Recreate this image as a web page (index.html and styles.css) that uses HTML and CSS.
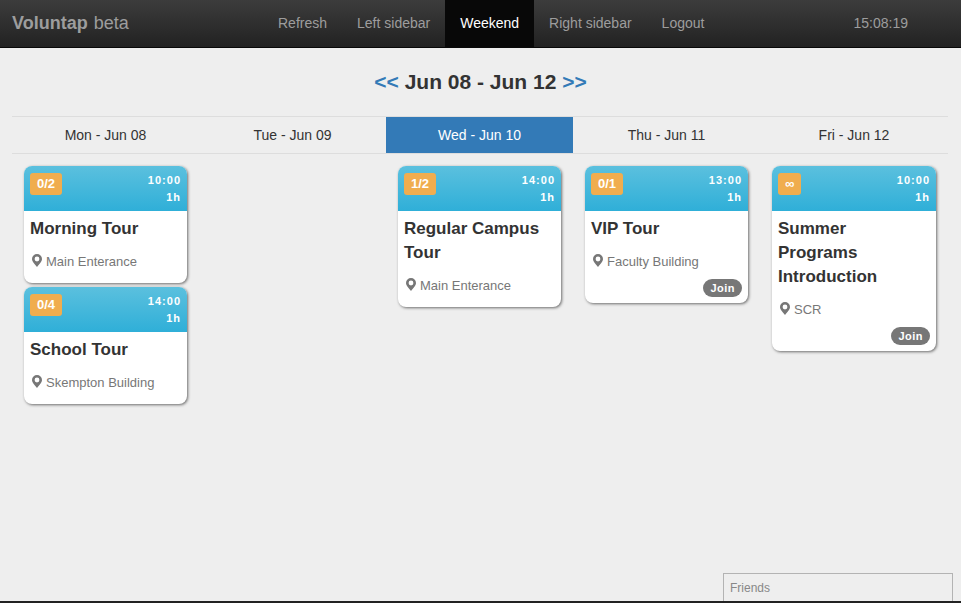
FILE: index.html
```html
<!DOCTYPE html>
<html lang="en">
<head>
    <meta charset="UTF-8">
    <title>Voluntap beta</title>
    <link rel="stylesheet" href="styles.css">
</head>
<body>

    <nav class="navbar">
        <a class="brand" href="#"><b>Voluntap</b> beta</a>
        <ul class="nav">
            <li><a href="#">Refresh</a></li>
            <li><a href="#">Left sidebar</a></li>
            <li class="active"><a href="#">Weekend</a></li>
            <li><a href="#">Right sidebar</a></li>
            <li><a href="#">Logout</a></li>
        </ul>
        <div class="clock">15:08:19</div>
    </nav>

    <h3 class="week"><a href="#">&lt;&lt;</a> Jun 08 - Jun 12 <a href="#">&gt;&gt;</a></h3>

    <div class="days">
        <div class="day">Mon - Jun 08</div>
        <div class="day">Tue - Jun 09</div>
        <div class="day active">Wed - Jun 10</div>
        <div class="day">Thu - Jun 11</div>
        <div class="day">Fri - Jun 12</div>
    </div>

    <div class="columns">
        <div class="column">
            <div class="card">
                <div class="card-head">
                    <span class="badge">0/2</span>
                    <span class="time">10:00<br>1h</span>
                </div>
                <div class="card-body">
                    <h4>Morning Tour</h4>
                    <p class="place"><svg class="pin" viewBox="0 0 10 13"><path fill-rule="evenodd" d="M5 0a5 5 0 0 1 5 5c0 3-3 5-5 8-2-3-5-5-5-8a5 5 0 0 1 5-5zm0 2.6a2.4 2.4 0 1 0 0 4.8 2.4 2.4 0 0 0 0-4.8z"/></svg>Main Enterance</p>
                </div>
            </div>
            <div class="card">
                <div class="card-head">
                    <span class="badge">0/4</span>
                    <span class="time">14:00<br>1h</span>
                </div>
                <div class="card-body">
                    <h4>School Tour</h4>
                    <p class="place"><svg class="pin" viewBox="0 0 10 13"><path fill-rule="evenodd" d="M5 0a5 5 0 0 1 5 5c0 3-3 5-5 8-2-3-5-5-5-8a5 5 0 0 1 5-5zm0 2.6a2.4 2.4 0 1 0 0 4.8 2.4 2.4 0 0 0 0-4.8z"/></svg>Skempton Building</p>
                </div>
            </div>
        </div>

        <div class="column"></div>

        <div class="column">
            <div class="card">
                <div class="card-head">
                    <span class="badge">1/2</span>
                    <span class="time">14:00<br>1h</span>
                </div>
                <div class="card-body">
                    <h4>Regular Campus Tour</h4>
                    <p class="place"><svg class="pin" viewBox="0 0 10 13"><path fill-rule="evenodd" d="M5 0a5 5 0 0 1 5 5c0 3-3 5-5 8-2-3-5-5-5-8a5 5 0 0 1 5-5zm0 2.6a2.4 2.4 0 1 0 0 4.8 2.4 2.4 0 0 0 0-4.8z"/></svg>Main Enterance</p>
                </div>
            </div>
        </div>

        <div class="column">
            <div class="card">
                <div class="card-head">
                    <span class="badge">0/1</span>
                    <span class="time">13:00<br>1h</span>
                </div>
                <div class="card-body">
                    <h4>VIP Tour</h4>
                    <p class="place"><svg class="pin" viewBox="0 0 10 13"><path fill-rule="evenodd" d="M5 0a5 5 0 0 1 5 5c0 3-3 5-5 8-2-3-5-5-5-8a5 5 0 0 1 5-5zm0 2.6a2.4 2.4 0 1 0 0 4.8 2.4 2.4 0 0 0 0-4.8z"/></svg>Faculty Building</p>
                    <div class="actions"><a class="join" href="#">Join</a></div>
                </div>
            </div>
        </div>

        <div class="column">
            <div class="card">
                <div class="card-head">
                    <span class="badge">&infin;</span>
                    <span class="time">10:00<br>1h</span>
                </div>
                <div class="card-body">
                    <h4>Summer Programs Introduction</h4>
                    <p class="place"><svg class="pin" viewBox="0 0 10 13"><path fill-rule="evenodd" d="M5 0a5 5 0 0 1 5 5c0 3-3 5-5 8-2-3-5-5-5-8a5 5 0 0 1 5-5zm0 2.6a2.4 2.4 0 1 0 0 4.8 2.4 2.4 0 0 0 0-4.8z"/></svg>SCR</p>
                    <div class="actions"><a class="join" href="#">Join</a></div>
                </div>
            </div>
        </div>
    </div>

    <div class="friends">Friends</div>
    <div class="bottom-bar"></div>

</body>
</html>
```

FILE: styles.css
```css
* { box-sizing: border-box; }
html, body { height: 100%; }
body { margin: 0; overflow: hidden; font-family: "Liberation Sans", Arial, sans-serif; font-size: 14px; line-height: 20px; color: #333; background-color: #eee; }
a { text-decoration: none; }

.navbar { display: flex; height: 48px; background-image: linear-gradient(to bottom, #3c3c3c 0, #222 100%); border-bottom: 1px solid #080808; }
.brand { width: 263px; padding: 0 0 0 12px; font-size: 18px; line-height: 46px; word-spacing: 1px; color: #9d9d9d; }
.nav { display: flex; margin: 0; padding: 0; list-style: none; }
.nav a { display: block; padding: 0 15px; line-height: 46px; height: 47px; color: #9d9d9d; }
.nav .active a { color: #fff; background-color: #080808; }
.clock { margin-left: auto; padding-right: 53px; line-height: 46px; color: #9d9d9d; }

.week { margin: 20px 0; font-size: 21px; line-height: 28px; font-weight: bold; text-align: center; }
.week a { color: #337ab7; }

.days { display: grid; grid-template-columns: repeat(4, 187px) 1fr; margin: 0 13px 0 12px; border-top: 1px solid #ddd; border-bottom: 1px solid #ddd; }
.day { height: 36px; line-height: 36px; text-align: center; }
.day.active { color: #fff; background-color: #337ab7; }

.columns { display: grid; grid-template-columns: repeat(4, 187px) 1fr; margin: 0 13px 0 12px; padding-top: 12px; }
.column { padding: 0 12px; min-width: 0; }

.card { margin-bottom: 4px; background: #fff; border-radius: 8px; box-shadow: 1px 1px 3px rgba(0, 0, 0, 0.55); overflow: hidden; }
.card-head { display: flex; justify-content: space-between; height: 45px; padding: 7px 6px 0; color: #fff; background-image: linear-gradient(to bottom, #5bc0de 0, #2fafd8 100%); }
.badge { min-width: 23px; height: 22px; padding: 0 7px; font-size: 13px; line-height: 22px; font-weight: bold; text-align: center; background: #f0ad4e; border-radius: 3px; }
.time { font-size: 11px; line-height: 17px; font-weight: bold; letter-spacing: 1px; text-align: right; margin-top: -1px; }
.card-body { padding: 6px 6px 0; min-height: 72px; }
.card-body h4 { margin: 0; font-size: 17px; line-height: 24px; font-weight: bold; }
.place { display: flex; align-items: center; margin: 11px 0; font-size: 13px; line-height: 20px; color: #777; }
.pin { width: 10px; height: 13px; margin: -3px 4px 0 2px; fill: #777; }
.actions { display: flex; justify-content: flex-end; margin-top: -4px; padding-bottom: 6px; }
.join { height: 18px; padding: 0 7px; font-size: 11px; line-height: 18px; font-weight: bold; letter-spacing: 0.5px; color: #fff; background: #777; border-radius: 9px; }

.friends { position: fixed; left: 723px; top: 573px; width: 230px; height: 30px; padding: 4px 6px; font-size: 12px; color: #888; border: 1px solid #b3b3b3; background: #eee; }
.bottom-bar { position: fixed; left: 0; right: 0; bottom: 0; height: 2px; background: #222; }
```
